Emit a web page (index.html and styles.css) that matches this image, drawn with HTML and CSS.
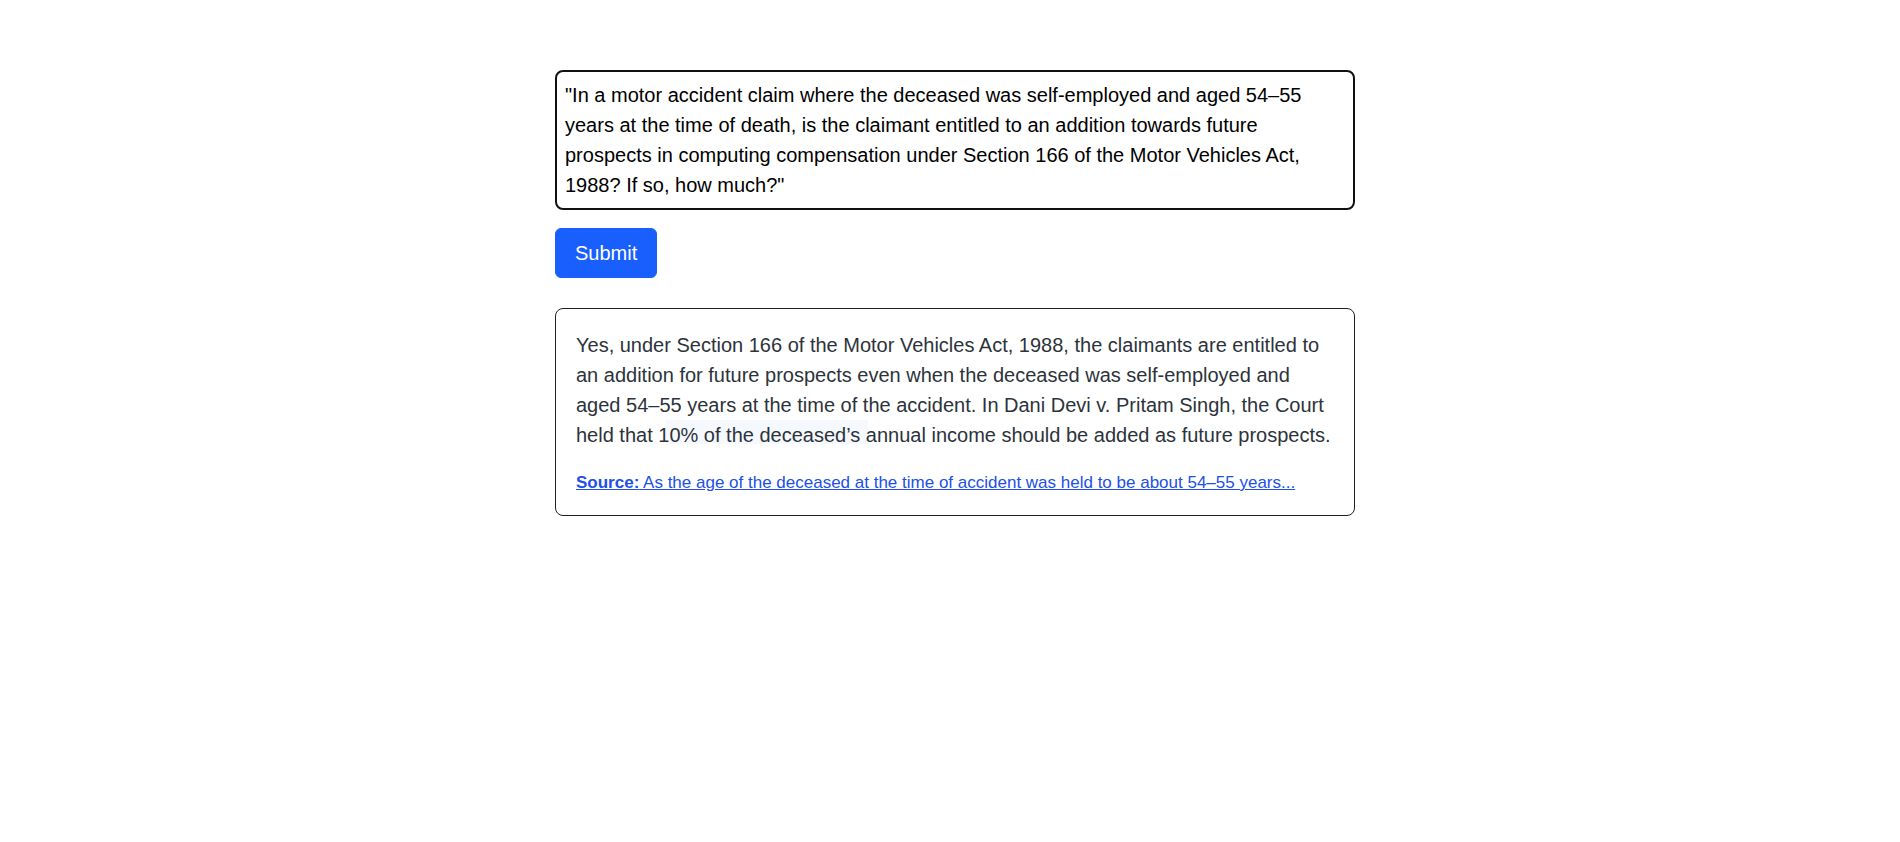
FILE: index.html
```html
<!DOCTYPE html>
<html lang="en">
<head>
<meta charset="utf-8">
<title>Legal Q&amp;A</title>
<link rel="stylesheet" href="styles.css">
</head>
<body>
<main class="page">
  <div class="container">
    <textarea class="query" rows="4">"In a motor accident claim where the deceased was self-employed and aged 54–55 years at the time of death, is the claimant entitled to an addition towards future prospects in computing compensation under Section 166 of the Motor Vehicles Act, 1988? If so, how much?"</textarea>
    <button class="submit" type="button">Submit</button>
    <section class="answer">
      <div class="snip" aria-hidden="true"></div>
      <p class="answer-text">Yes, under Section 166 of the Motor Vehicles Act, 1988, the claimants are entitled to an addition for future prospects even when the deceased was self-employed and aged 54–55 years at the time of the accident. In Dani Devi v. Pritam Singh, the Court held that 10% of the deceased’s annual income should be added as future prospects.</p>
      <a class="source" href="#"><strong>Source:</strong> As the age of the deceased at the time of accident was held to be about 54–55 years...</a>
    </section>
  </div>
</main>
</body>
</html>
```

FILE: styles.css
```css
html, body {
  margin: 0;
  padding: 0;
  background: #ffffff;
}

body {
  font-family: "Segoe UI", "Liberation Sans", Arial, sans-serif;
  color: #212529;
}

.page {
  padding: 70px 0 0 10px;
}

.container {
  width: 800px;
  margin: 0 auto;
  display: flex;
  flex-direction: column;
  align-items: flex-start;
}

.query {
  display: block;
  box-sizing: border-box;
  width: 800px;
  height: 140px;
  margin: 0 0 18px 0;
  padding: 8px 8px;
  border: 2px solid #111111;
  border-radius: 8px;
  font-family: "Segoe UI", "Liberation Sans", Arial, sans-serif;
  font-size: 20px;
  line-height: 30px;
  color: #000000;
  background: #ffffff;
  resize: none;
  overflow: hidden;
  outline: none;
}

.submit {
  box-sizing: border-box;
  height: 50px;
  padding: 0 19px;
  border: 1px solid #195ffe;
  border-radius: 6px;
  background: #195ffe;
  color: #ffffff;
  font-family: "Segoe UI", "Liberation Sans", Arial, sans-serif;
  font-size: 20px;
  line-height: 30px;
  cursor: pointer;
}

.answer {
  position: relative;
  box-sizing: border-box;
  width: 800px;
  margin-top: 30px;
  padding: 21px 20px 19px 20px;
  border: 1px solid #1f1f1f;
  border-radius: 8px;
}

.snip {
  position: absolute;
  left: 110px;
  top: 111px;
  width: 202px;
  height: 24px;
  background: rgba(225, 236, 248, 0.35);
  pointer-events: none;
}

.answer-text {
  position: relative;
  margin: 0 0 20px 0;
  font-size: 20px;
  line-height: 30px;
  color: #2d333b;
}

.source {
  position: relative;
  display: block;
  font-size: 17px;
  line-height: 25.5px;
  color: #2150e8;
  text-decoration: underline;
}

.source strong {
  font-weight: 700;
}
```
